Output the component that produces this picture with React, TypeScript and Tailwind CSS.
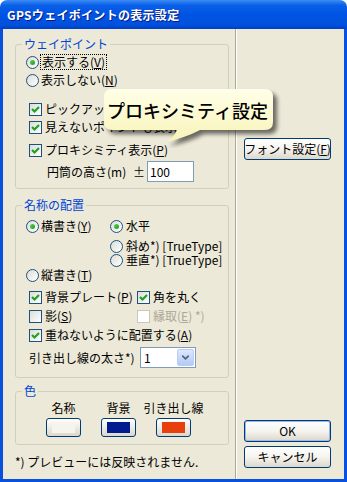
import { ChevronDown } from 'lucide-react';
import type { ReactNode } from 'react';

const ui = "font-['Noto_Sans_CJK_JP',sans-serif] text-[12px] leading-[14px] text-black whitespace-nowrap";

function Radio({ checked }: { checked?: boolean }) {
  return (
    <span className="w-[13px] h-[13px] shrink-0 rounded-full border border-[#1c5180] bg-gradient-to-br from-[#dcdcd7] to-white flex items-center justify-center">
      {checked && <span className="w-[5px] h-[5px] rounded-full bg-gradient-to-br from-[#55d551] to-[#1a9a1a]" />}
    </span>
  );
}

function Check({ checked, disabled }: { checked?: boolean; disabled?: boolean }) {
  return (
    <span
      className={
        disabled
          ? 'w-[13px] h-[13px] shrink-0 border border-[#cac8bb] bg-white'
          : 'w-[13px] h-[13px] shrink-0 border border-[#1c5180] bg-gradient-to-br from-[#dcdcd7] to-white flex items-center justify-center'
      }
    >
      {checked && (
        <svg width="11" height="11" viewBox="0 0 11 11">
          <polyline points="2,5 4.5,7.5 9,3" fill="none" stroke="#21a121" strokeWidth="2.2" />
        </svg>
      )}
    </span>
  );
}

function Key({ k }: { k: string }) {
  return (
    <>
      (<span className="underline">{k}</span>)
    </>
  );
}

function Group({ title, children, className }: { title: string; children: ReactNode; className: string }) {
  return (
    <fieldset className={`w-[214px] border border-[#d0d0bf] rounded-[3px] p-0 ${className}`}>
      <legend className="ml-[6px] px-[2px] text-[#0046d5]">{title}</legend>
      {children}
    </fieldset>
  );
}

function XpButton({ children, className }: { children: ReactNode; className: string }) {
  return (
    <div
      className={`rounded-[3px] border border-[#003c74] bg-gradient-to-b from-white via-[#f5f4ef] to-[#dcd7cb] flex items-center justify-center ${className}`}
    >
      {children}
    </div>
  );
}

function Swatch({ color }: { color: string }) {
  return (
    <div className="w-[35px] h-[19px] rounded-[3px] border border-[#003c74] bg-gradient-to-b from-white to-[#dcd7cb] pl-[5px] pt-[3px]">
      <div className="w-[23px] h-[11px]" style={{ background: color }} />
    </div>
  );
}

export default function App() {
  return (
    <div className={`relative w-[347px] h-[482px] bg-white ${ui}`}>
      {/* Title bar */}
      <div className="h-[29px] rounded-t-[7px] bg-[linear-gradient(to_bottom,#3d8df5_0%,#0a5fe8_18%,#0054e3_50%,#0051dd_85%,#003fc8_100%)] flex items-center pl-[7px]">
        <span className="text-white font-bold text-[12px] tracking-[0.3px] [text-shadow:1px_1px_#0a1883]">
          GPSウェイポイントの表示設定
        </span>
      </div>

      {/* Body */}
      <div className="h-[453px] border-x-[3px] border-b-[3px] border-[#0850de] bg-[#ece9d8] flex">
        {/* Left panel */}
        <div className="w-[233px] border-r border-[#aca899] pl-[12px] flex flex-col">
          <Group title="ウェイポイント" className="mt-[8px] pb-[6px]">
            <div className="mt-[2px] h-[18px] pl-[10px] flex items-center gap-[2px]">
              <Radio checked />
              <span className="outline-1 outline-dotted outline-black px-[1px]">
                表示する<Key k="V" />
              </span>
            </div>
            <div className="h-[18px] pl-[10px] flex items-center gap-[2px]">
              <Radio />
              <span>
                表示しない<Key k="N" />
              </span>
            </div>
            <div className="mt-[11px] h-[18px] pl-[13px] flex items-center gap-[3px]">
              <Check checked />
              <span>ピックアップ</span>
            </div>
            <div className="h-[18px] pl-[13px] flex items-center gap-[3px]">
              <Check checked />
              <span>見えないポイントも表示</span>
            </div>
            <div className="mt-[5px] h-[18px] pl-[13px] flex items-center gap-[3px]">
              <Check checked />
              <span>
                プロキシミティ表示<Key k="P" />
              </span>
            </div>
            <div className="mt-[2px] h-[21px] pl-[31px] flex items-center">
              <span className="w-[86px]">円筒の高さ(m)</span>
              <span className="w-[14px]">±</span>
              <div className="w-[47px] h-[21px] border border-[#7f9db9] bg-white pl-[2px] flex items-center">100</div>
            </div>
          </Group>

          <Group title="名称の配置" className="mt-[9px] pb-[9px]">
            <div className="mt-[5px] h-[18px] pl-[10px] flex items-center">
              <div className="w-[84px] flex items-center gap-[2px]">
                <Radio checked />
                <span>
                  横書き<Key k="Y" />
                </span>
              </div>
              <div className="flex items-center gap-[3px]">
                <Radio checked />
                <span>水平</span>
              </div>
            </div>
            <div className="mt-[4px] h-[14px] pl-[94px] flex items-center gap-[3px]">
              <Radio />
              <span>斜め*) [TrueType]</span>
            </div>
            <div className="h-[14px] pl-[94px] flex items-center gap-[3px]">
              <Radio />
              <span>垂直*) [TrueType]</span>
            </div>
            <div className="mt-[1px] h-[14px] pl-[10px] flex items-center gap-[2px]">
              <Radio />
              <span>
                縦書き<Key k="T" />
              </span>
            </div>
            <div className="mt-[6px] h-[18px] pl-[13px] flex items-center">
              <div className="w-[108px] flex items-center gap-[3px]">
                <Check checked />
                <span>
                  背景プレート<Key k="P" />
                </span>
              </div>
              <div className="flex items-center gap-[3px]">
                <Check checked />
                <span>角を丸く</span>
              </div>
            </div>
            <div className="mt-[1px] h-[18px] pl-[13px] flex items-center">
              <div className="w-[108px] flex items-center gap-[3px]">
                <Check />
                <span>
                  影<Key k="S" />
                </span>
              </div>
              <div className="flex items-center gap-[3px] text-[#aca899]">
                <Check disabled />
                <span>
                  縁取<Key k="E" /> *)
                </span>
              </div>
            </div>
            <div className="mt-[1px] h-[18px] pl-[13px] flex items-center gap-[3px]">
              <Check checked />
              <span>
                重ねないように配置する<Key k="A" />
              </span>
            </div>
            <div className="mt-[3px] h-[21px] pl-[13px] flex items-center">
              <span className="w-[111px]">引き出し線の太さ*)</span>
              <div className="w-[56px] h-[21px] border border-[#7f9db9] bg-white flex items-center justify-between pl-[3px] pr-[1px]">
                <span>1</span>
                <div className="w-[17px] h-[17px] rounded-[2px] border border-[#b9cdf7] bg-gradient-to-b from-[#dde8fe] to-[#b5c9f5] flex items-center justify-center">
                  <ChevronDown size={11} strokeWidth={3.5} color="#4d6185" />
                </div>
              </div>
            </div>
          </Group>

          <Group title="色" className="mt-[6px] pb-[7px]">
            <div className="pl-[20px] flex">
              {[
                ['名称', '#f5f5ee'],
                ['背景', '#001a8f'],
                ['引き出し線', '#e8400c'],
              ].map(([label, color]) => (
                <div key={label} className="w-[55px] flex flex-col items-center">
                  <span className="mt-[3px] h-[14px]">{label}</span>
                  <div className="mt-[3px]">
                    <Swatch color={color} />
                  </div>
                </div>
              ))}
            </div>
          </Group>

          <div className="mt-[10px] h-[14px]">*) プレビューには反映されません.</div>
        </div>

        {/* Right panel */}
        <div className="flex-1 border-l border-white pl-[7px] pb-[11px] flex flex-col">
          <XpButton className="mt-[109px] w-[87px] h-[22px]">
            フォント設定<Key k="F" />
          </XpButton>
          <XpButton className="mt-auto w-[87px] h-[22px] shadow-[inset_0_0_0_1px_#97b8f3]">OK</XpButton>
          <XpButton className="mt-[4px] w-[87px] h-[22px]">キャンセル</XpButton>
        </div>
      </div>

      {/* Balloon tooltip */}
      <div className="absolute left-[98px] top-[86px] w-[185px] h-[62px]">
        <svg width="185" height="62" viewBox="0 0 185 62" className="absolute inset-0">
          <defs>
            <filter id="blur" x="-10%" y="-10%" width="130%" height="140%">
              <feGaussianBlur stdDeviation="2" />
            </filter>
            <linearGradient id="fill" x1="0" y1="0" x2="0" y2="1">
              <stop offset="0" stopColor="#ffffe8" />
              <stop offset="1" stopColor="#f8f3b8" />
            </linearGradient>
          </defs>
          <path
            d="M14 3 H167 Q175 3 175 11 V36 Q175 44 167 44 H102 Q87 52 67 56 Q77 51 79 44 H14 Q6 44 6 36 V11 Q6 3 14 3 Z"
            fill="#000"
            opacity="0.55"
            transform="translate(4 4)"
            filter="url(#blur)"
          />
          <path
            d="M14 3 H167 Q175 3 175 11 V36 Q175 44 167 44 H102 Q87 52 67 56 Q77 51 79 44 H14 Q6 44 6 36 V11 Q6 3 14 3 Z"
            fill="url(#fill)"
          />
        </svg>
        <span className="absolute left-[9px] top-[13px] text-[18px] leading-[22px] font-medium">
          プロキシミティ設定
        </span>
      </div>
    </div>
  );
}
